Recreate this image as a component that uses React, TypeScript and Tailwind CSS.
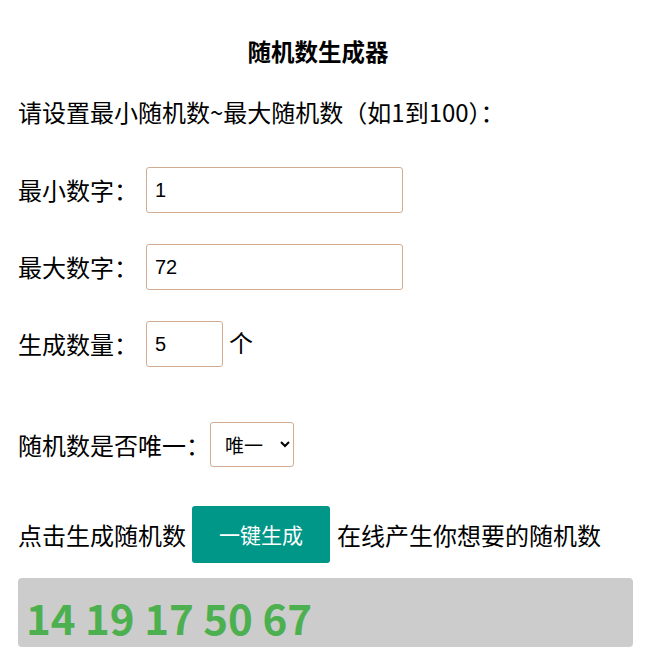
import React, { useState } from 'react';

const cjk = { fontFamily: '"Noto Sans CJK SC", "Noto Sans", sans-serif' };
const arial = { fontFamily: '"Liberation Sans", Arial, sans-serif' };

export default function App() {
    const [min, setMin] = useState('1');
    const [max, setMax] = useState('72');
    const [count, setCount] = useState('5');
    const [unique, setUnique] = useState('1');
    const [result, setResult] = useState('14 19 17 50 67');

    const generate = () => {
        const lo = parseInt(min, 10) || 0;
        const hi = parseInt(max, 10) || 0;
        const n = parseInt(count, 10) || 0;
        const out: number[] = [];
        let guard = 0;
        while (out.length < n && guard < 10000) {
            guard++;
            const v = lo + Math.floor(Math.random() * (hi - lo + 1));
            if (unique === '1' && out.includes(v)) continue;
            out.push(v);
        }
        setResult(out.join(' '));
    };

    const inputCls =
        'h-[46px] border border-[#d3ab93] rounded-[3px] px-2 text-[20px] text-black outline-none bg-white';

    return (
        <div className="w-[646px] min-h-[662px] bg-white text-black px-[18px] pb-4" style={cjk}>
            {/* Title */}
            <div className="pt-[35px] h-[69px] pr-[10px] text-center text-[23.5px] font-bold leading-[32px]">
                随机数生成器
            </div>

            <div className="mt-[27px] h-[32px] flex items-center text-[24px] leading-[32px]">
                请设置最小随机数~最大随机数（如1到100）：
            </div>

            {/* Inputs */}
            <div className="mt-[39px] flex items-center text-[24px]">
                <span className="w-[128px]">最小数字：</span>
                <input
                    className={`${inputCls} w-[257px]`}
                    style={arial}
                    value={min}
                    onChange={(e) => setMin(e.target.value)}
                />
            </div>

            <div className="mt-[31px] flex items-center text-[24px]">
                <span className="w-[128px]">最大数字：</span>
                <input
                    className={`${inputCls} w-[257px]`}
                    style={arial}
                    value={max}
                    onChange={(e) => setMax(e.target.value)}
                />
            </div>

            <div className="mt-[31px] flex items-center text-[24px]">
                <span className="w-[128px]">生成数量：</span>
                <input
                    className={`${inputCls} w-[77px]`}
                    style={arial}
                    value={count}
                    onChange={(e) => setCount(e.target.value)}
                />
                <span className="ml-[6px] -mt-[4px]">个</span>
            </div>

            {/* Unique */}
            <div className="mt-[55px] flex items-center text-[24px]">
                <span className="w-[192px]">随机数是否唯一：</span>
                <select
                    className="w-[84px] h-[45px] border border-[#d3ab93] rounded-[3px] pl-[10px] text-[19px] bg-white outline-none"
                    style={cjk}
                    value={unique}
                    onChange={(e) => setUnique(e.target.value)}
                >
                    <option value="1">唯一</option>
                    <option value="0">可重复</option>
                </select>
            </div>

            {/* Generate */}
            <div className="mt-[39px] flex items-center text-[24px]">
                <span>点击生成随机数</span>
                <button
                    onClick={generate}
                    className="ml-[6px] mr-[7px] w-[138px] h-[57px] bg-[#009688] text-white text-[21px] rounded-[3px]"
                    style={cjk}
                >
                    一键生成
                </button>
                <span>在线产生你想要的随机数</span>
            </div>

            {/* Result */}
            <div className="mt-[15px] w-[615px] h-[69px] bg-[#cccccc] rounded-[4px] flex items-center px-[8px]">
                <span className="text-[42px] font-bold text-[#4cb050] leading-none mt-[8px]">{result}</span>
            </div>
        </div>
    );
}
